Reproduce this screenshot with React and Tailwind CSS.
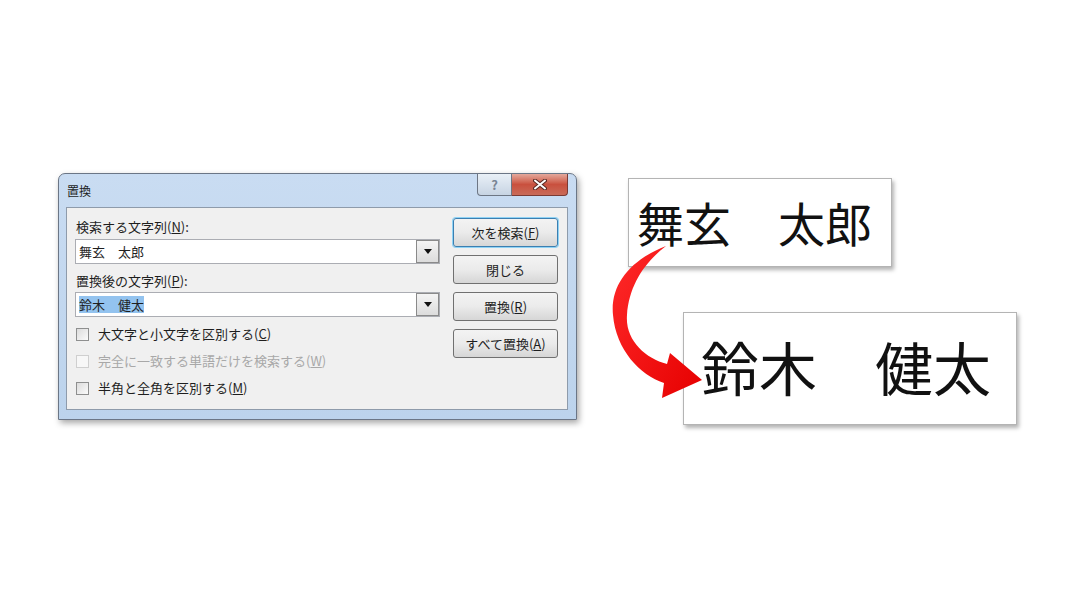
import React from "react";

function Combo({ children }) {
  return (
    <div className="mt-[3px] h-[25px] w-[365px] flex border border-[#abadb3] bg-white">
      <div className="flex-1 flex items-center pl-[2px] text-[13px] leading-none">{children}</div>
      <div className="w-[23px] h-full border border-[#8a8a8a] bg-linear-to-b from-[#f4f4f4] to-[#dcdcdc] flex items-center justify-center">
        <svg width="8" height="5" viewBox="0 0 8 5">
          <path d="M0 0 H8 L4 5 Z" fill="#111" />
        </svg>
      </div>
    </div>
  );
}

function Check({ label, disabled }) {
  return (
    <div className={`h-[20px] flex items-center text-[13px] ${disabled ? "text-[#a8a8a8]" : "text-[#1e1e1e]"}`}>
      <span
        className={`ml-[1px] w-[13px] h-[13px] border ${
          disabled ? "border-[#cfcfcf] bg-[#f7f7f7]" : "border-[#8e8f8f] bg-linear-to-br from-[#dcdcdc] to-[#fbfbfb]"
        }`}
      />
      <span className="ml-[9px]">{label}</span>
    </div>
  );
}

function Btn({ children, primary }) {
  return (
    <button
      className={`w-[105px] h-[29px] rounded-[3px] border text-[13px] text-[#1e1e1e] bg-linear-to-b from-[#f3f3f3] via-[#ebebeb] to-[#d6d6d6] ${
        primary ? "border-[#3c7fb1] shadow-[0_0_0_1px_#8fd3f5]" : "border-[#707070]"
      }`}
    >
      {children}
    </button>
  );
}

export default function App() {
  return (
    <div className="w-[1078px] h-[606px] bg-white flex items-start pt-[173px] pl-[58px] font-['Noto_Sans_CJK_JP',sans-serif]">
      {/* Replace dialog */}
      <div className="w-[519px] h-[247px] flex flex-col rounded-t-[7px] border border-[#6b7686] bg-linear-to-b from-[#c9dcf2] to-[#bcd3ec] shadow-[2px_3px_6px_rgba(0,0,0,0.35)]">
        <div className="h-[33px] flex items-start justify-between">
          <span className="ml-[8px] mt-[8px] text-[12px] text-[#1e1e1e]">置換</span>
          <div className="mr-[8px] flex">
            <div className="w-[35px] h-[22px] rounded-bl-[4px] border border-t-0 border-[#6d7684] bg-linear-to-b from-[#e9f0f7] to-[#c7d4e3] flex items-center justify-center text-[13px] font-bold text-[#7a8594] leading-none">
              ?
            </div>
            <div className="w-[56px] h-[22px] rounded-br-[4px] border border-t-0 border-l-0 border-[#7a3a34] bg-linear-to-b from-[#e3a89c] via-[#c9503e] to-[#c96a58] flex items-center justify-center">
              <svg width="14" height="11" viewBox="0 0 14 11">
                <path d="M2 1.5 L12 9.5 M12 1.5 L2 9.5" stroke="#5a2a24" strokeWidth="4" strokeLinecap="round" />
                <path d="M2 1.5 L12 9.5 M12 1.5 L2 9.5" stroke="#fff" strokeWidth="2" strokeLinecap="round" />
              </svg>
            </div>
          </div>
        </div>

        <div className="flex-1 ml-[7px] mr-[8px] mb-[9px] border border-[#8e9bab] bg-[#f0f0f0] flex pt-[10px] text-[#1e1e1e]">
          <div className="pl-[8px] flex flex-col">
            <div className="h-[18px] leading-[18px] pl-[1px] text-[13px]">
              検索する文字列(<span className="underline">N</span>):
            </div>
            <Combo>
              <span className="ml-[1px]">舞玄　太郎</span>
            </Combo>
            <div className="mt-[8px] h-[18px] leading-[18px] pl-[1px] text-[13px]">
              置換後の文字列(<span className="underline">P</span>):
            </div>
            <div className="-mt-[1px]">
              <Combo>
                <span className="ml-[1px] bg-[#93c3ef] py-[2px]">鈴木　健太</span>
              </Combo>
            </div>
            <div className="mt-[7px] flex flex-col gap-[7px]">
              <Check label={<>大文字と小文字を区別する(<span className="underline">C</span>)</>} />
              <Check disabled label={<>完全に一致する単語だけを検索する(<span className="underline">W</span>)</>} />
              <Check label={<>半角と全角を区別する(<span className="underline">M</span>)</>} />
            </div>
          </div>

          <div className="ml-[13px] flex flex-col gap-[8px]">
            <Btn primary>
              次を検索(<span className="underline">F</span>)
            </Btn>
            <Btn>閉じる</Btn>
            <Btn>
              置換(<span className="underline">R</span>)
            </Btn>
            <Btn>
              すべて置換(<span className="underline">A</span>)
            </Btn>
          </div>
        </div>
      </div>

      {/* Before / after cards */}
      <div className="relative ml-[51px] flex flex-col">
        <div className="mt-[5px] w-[264px] h-[89px] border border-[#b4b4b4] bg-white shadow-[2px_3px_4px_rgba(0,0,0,0.3)] flex items-center pl-[8px] pb-[2px]">
          <span className="text-[47px] leading-none text-[#111]">舞玄　太郎</span>
        </div>
        <div className="mt-[45px] ml-[55px] w-[334px] h-[113px] border border-[#b4b4b4] bg-white shadow-[2px_3px_4px_rgba(0,0,0,0.3)] flex items-center pl-[17px] pb-[6px]">
          <span className="text-[58px] leading-none text-[#111]">鈴木　健太</span>
        </div>

        <svg className="absolute left-[-28px] top-[67px]" width="110" height="170" viewBox="0 0 110 170">
          <defs>
            <linearGradient id="arr" x1="0" y1="0" x2="1" y2="1">
              <stop offset="0" stopColor="#ff2a2a" />
              <stop offset="1" stopColor="#e60000" />
            </linearGradient>
          </defs>
          <path
            d="M66 6 C30 20 10 45 13 75 C16 110 40 135 64 143 L62 158 L102 140 L70 113 L67 124 C45 118 25 100 27 75 C29 45 45 22 66 6 Z"
            fill="url(#arr)"
          />
        </svg>
      </div>
    </div>
  );
}
